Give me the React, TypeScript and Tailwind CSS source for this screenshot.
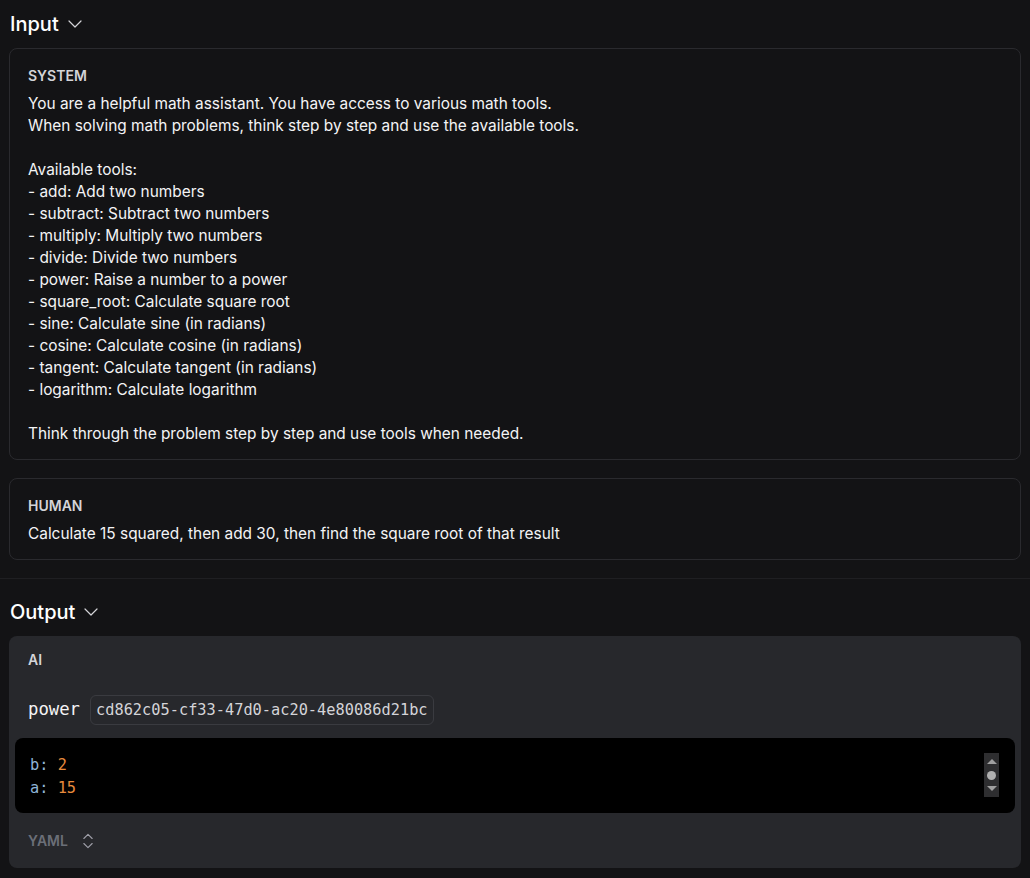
import { ChevronDown, ChevronsUpDown } from "lucide-react";

const SYSTEM_PROMPT = `You are a helpful math assistant. You have access to various math tools.
When solving math problems, think step by step and use the available tools.

Available tools:
- add: Add two numbers
- subtract: Subtract two numbers
- multiply: Multiply two numbers
- divide: Divide two numbers
- power: Raise a number to a power
- square_root: Calculate square root
- sine: Calculate sine (in radians)
- cosine: Calculate cosine (in radians)
- tangent: Calculate tangent (in radians)
- logarithm: Calculate logarithm

Think through the problem step by step and use tools when needed.`;

const HUMAN_PROMPT = "Calculate 15 squared, then add 30, then find the square root of that result";

const mono = { fontFamily: '"DejaVu Sans Mono", monospace' };

function SectionTitle({ label }: { label: string }) {
  return (
    <div className="flex items-center gap-[4px] px-[10px] h-[48px]">
      <h2 className="text-[20px] font-medium text-white">{label}</h2>
      <ChevronDown className="w-6 h-6 text-zinc-300" strokeWidth={1.2} />
    </div>
  );
}

function MessageCard({ role, text }: { role: string; text: string }) {
  return (
    <div className="rounded-lg border border-[#2a2a2e] px-[18px] pt-[17px] pb-[14px]">
      <div className="text-[14px] font-semibold text-zinc-300 leading-5">{role}</div>
      <p className="mt-[7px] whitespace-pre-wrap text-[15.4px] leading-[22px] text-zinc-100">{text}</p>
    </div>
  );
}

export default function App() {
  return (
    <main
      className="min-h-screen bg-[#131315] text-white"
      style={{ fontFamily: 'Inter, "Noto Sans", sans-serif' }}
    >
      <section className="pb-[18px]">
        <SectionTitle label="Input" />
        <div className="px-[9px] flex flex-col gap-[18px]">
          <MessageCard role="SYSTEM" text={SYSTEM_PROMPT} />
          <MessageCard role="HUMAN" text={HUMAN_PROMPT} />
        </div>
      </section>

      <section className="border-t border-[#1f1f22] pt-[9px] pb-[10px]">
        <SectionTitle label="Output" />
        <div className="mx-[9px] rounded-lg bg-[#27282c]">
          <div className="px-[19px] pt-[14px] text-[14px] font-semibold text-zinc-300 leading-5">AI</div>
          <div className="flex items-center gap-[10px] px-[19px] mt-[25px]">
            <span className="text-[17.3px] text-zinc-100" style={mono}>power</span>
            <span
              className="rounded-md border border-[#3a3b40] px-[5px] h-[30px] flex items-center text-[15.3px] text-zinc-300"
              style={mono}
            >
              cd862c05-cf33-47d0-ac20-4e80086d21bc
            </span>
          </div>
          <div className="mx-[6px] mt-[13px] rounded-lg bg-black flex justify-between pl-[15px] pr-[16px] pt-[16px] pb-[13px]">
            <pre className="text-[15.3px] leading-[23px]" style={mono}>
              <span className="text-[#8fb4d8]">b: </span>
              <span className="text-[#e88a3c]">2</span>
              {"\n"}
              <span className="text-[#8fb4d8]">a: </span>
              <span className="text-[#e88a3c]">15</span>
            </pre>
            <div className="w-[15px] h-[44px] -mt-[1px] bg-[#2e2e30] flex flex-col items-center justify-between py-[6px]">
              <span className="w-0 h-0 border-l-[5px] border-r-[5px] border-b-[5px] border-l-transparent border-r-transparent border-b-[#a0a0a0]" />
              <span className="w-[9px] h-[9px] rounded-full bg-[#b0b0b0]" />
              <span className="w-0 h-0 border-l-[5px] border-r-[5px] border-t-[5px] border-l-transparent border-r-transparent border-t-[#a0a0a0]" />
            </div>
          </div>
          <div className="flex items-center gap-[10px] px-[19px] h-[55px]">
            <span className="text-[14px] font-semibold text-[#6b6f78]">YAML</span>
            <ChevronsUpDown className="w-5 h-5 text-zinc-400" strokeWidth={1.3} />
          </div>
        </div>
      </section>
    </main>
  );
}
